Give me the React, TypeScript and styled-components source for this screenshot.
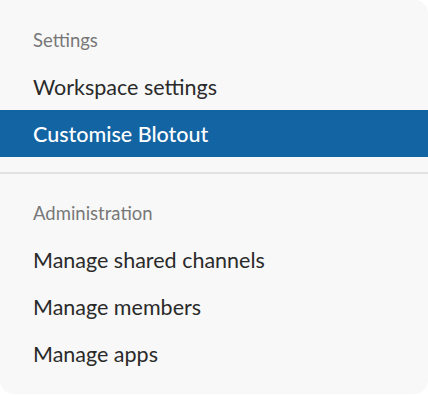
import React from "react";
import styled, { createGlobalStyle } from "styled-components";

const Global = createGlobalStyle`
  html, body { margin: 0; padding: 0; background: #ffffff; }
  body { font-family: Lato, "Open Sans", sans-serif; -webkit-font-smoothing: antialiased; }
`;

const Panel = styled.nav`
  box-sizing: border-box;
  width: 428px;
  height: 394px;
  background: #f8f8f8;
  border-radius: 0 14px 14px 14px;
  padding-top: 27px;
  display: flex;
  flex-direction: column;
`;

const Section = styled.div`
  display: flex;
  flex-direction: column;
`;

const Header = styled.div`
  padding: 0 33px;
  height: 26px;
  line-height: 26px;
  font-size: 18.5px;
  color: #787878;
  margin-bottom: 10px;
`;

const Item = styled.div<{ $active?: boolean }>`
  padding: 0 33px;
  height: 47px;
  display: flex;
  align-items: center;
  font-size: 21.5px;
  color: ${(p) => (p.$active ? "#ffffff" : "#2a2a2a")};
  background: ${(p) => (p.$active ? "#1264a3" : "transparent")};
  font-weight: ${(p) => (p.$active ? 500 : 400)};
`;

const Divider = styled.hr`
  margin: 15px 0 26px;
  border: none;
  height: 2px;
  background: #e2e2e2;
`;

export default function App() {
  return (
    <>
      <Global />
      <Panel>
        <Section>
          <Header>Settings</Header>
          <Item>Workspace settings</Item>
          <Item $active>Customise Blotout</Item>
        </Section>
        <Divider />
        <Section>
          <Header>Administration</Header>
          <Item>Manage shared channels</Item>
          <Item>Manage members</Item>
          <Item>Manage apps</Item>
        </Section>
      </Panel>
    </>
  );
}
